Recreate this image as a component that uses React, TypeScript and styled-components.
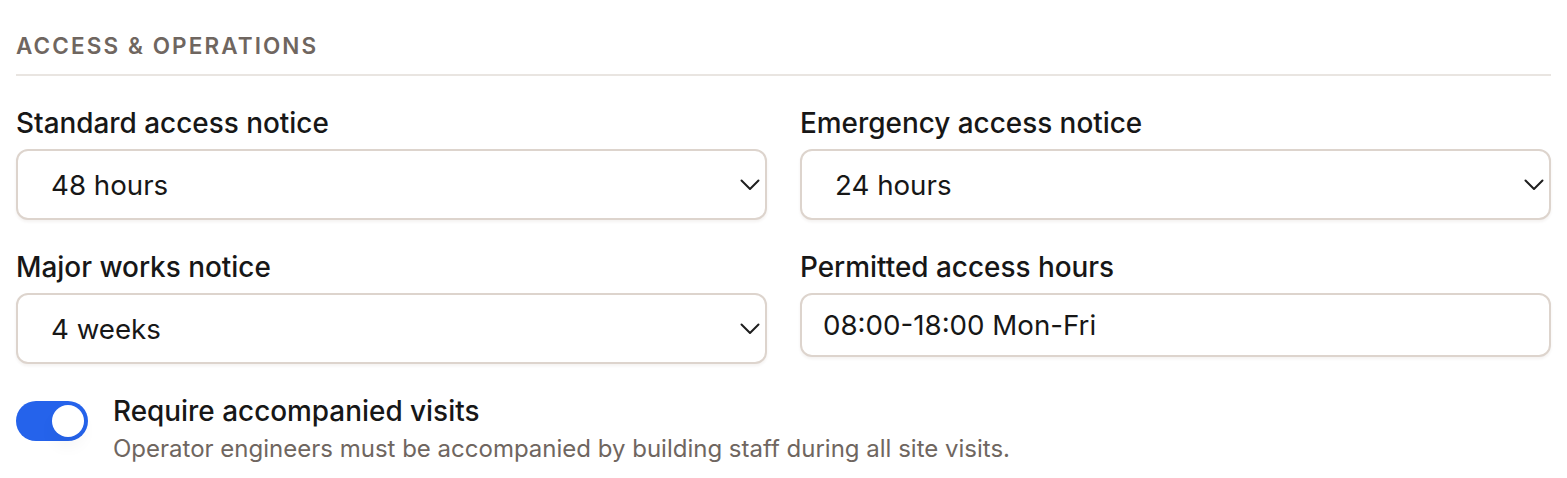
import React from "react";
import styled, { createGlobalStyle } from "styled-components";

const Global = createGlobalStyle`
  html, body { margin: 0; padding: 0; background: #ffffff; }
  body { font-family: Inter, "Noto Sans", sans-serif; color: #171717; }
  * { box-sizing: border-box; }
`;

const Section = styled.section`
  padding: 28px 16px 20px 16px;
  display: flex;
  flex-direction: column;
`;

const Heading = styled.h2`
  margin: 0;
  font-size: 22.5px;
  line-height: 36px;
  font-weight: 600;
  letter-spacing: 2.1px;
  text-transform: uppercase;
  color: #6f6660;
  padding-bottom: 10px;
  border-bottom: 2px solid #e9e5e1;
`;

const Grid = styled.div`
  display: grid;
  grid-template-columns: 1fr 1fr;
  column-gap: 33px;
  row-gap: 30px;
  margin-top: 30px;
`;

const Field = styled.div`
  display: flex;
  flex-direction: column;
  gap: 9px;
`;

const Label = styled.label`
  font-size: 27.9px;
  line-height: 34px;
  font-weight: 450;
  color: #171717;
`;

const SelectWrap = styled.div`
  position: relative;
  display: flex;
`;

const Select = styled.select`
  appearance: none;
  -webkit-appearance: none;
  width: 100%;
  height: 71px;
  padding: 0 60px 0 33px;
  font-family: inherit;
  font-size: 27.7px;
  color: #171717;
  background: #ffffff;
  border: 2px solid #ddd4cd;
  border-radius: 12px;
  box-shadow: 0 2px 3px rgba(60, 40, 20, 0.06);
  outline: none;
`;

const Chevron = styled.svg`
  position: absolute;
  right: 7px;
  top: 50%;
  transform: translateY(-50%);
  pointer-events: none;
`;

const TextInput = styled.input`
  width: 100%;
  height: 64px;
  padding: 0 21px;
  font-family: inherit;
  font-size: 27.7px;
  color: #171717;
  background: #ffffff;
  border: 2px solid #ddd4cd;
  border-radius: 12px;
  box-shadow: 0 2px 3px rgba(60, 40, 20, 0.06);
  outline: none;
`;

const ToggleRow = styled.div`
  display: flex;
  align-items: flex-start;
  gap: 25px;
  margin-top: 30px;
`;

const Track = styled.button<{ $on: boolean }>`
  position: relative;
  flex: none;
  width: 72px;
  height: 40px;
  border: none;
  padding: 0;
  border-radius: 20px;
  background: ${(p) => (p.$on ? "#2563eb" : "#d6d0cb")};
  cursor: pointer;
  margin-top: 7px;
`;

const Knob = styled.span<{ $on: boolean }>`
  position: absolute;
  top: 4px;
  left: ${(p) => (p.$on ? "36px" : "4px")};
  width: 32px;
  height: 32px;
  border-radius: 50%;
  background: #ffffff;
  box-shadow: 0 10px 16px rgba(0, 0, 0, 0.04);
`;

const ToggleText = styled.div`
  display: flex;
  flex-direction: column;
  gap: 5px;
`;

const ToggleTitle = styled.div`
  font-size: 27.9px;
  line-height: 34px;
  font-weight: 450;
  color: #171717;
`;

const ToggleDesc = styled.div`
  font-size: 24px;
  line-height: 32px;
  color: #6f6660;
`;

const ChevronIcon = () => (
  <Chevron width="20" height="12" viewBox="0 0 20 12" fill="none" stroke="#1f1f1f" strokeWidth="2" strokeLinecap="round" strokeLinejoin="round">
    <path d="M1.5 1.5L10 10L18.5 1.5" />
  </Chevron>
);

const SelectField = ({ label, value, options }: { label: string; value: string; options: string[] }) => (
  <Field>
    <Label>{label}</Label>
    <SelectWrap>
      <Select defaultValue={value}>
        {options.map((o) => (
          <option key={o}>{o}</option>
        ))}
      </Select>
      <ChevronIcon />
    </SelectWrap>
  </Field>
);

export default function App() {
  const [on, setOn] = React.useState(true);
  return (
    <>
      <Global />
      <Section>
        <Heading>Access &amp; Operations</Heading>
        <Grid>
          <SelectField label="Standard access notice" value="48 hours" options={["24 hours", "48 hours", "72 hours"]} />
          <SelectField label="Emergency access notice" value="24 hours" options={["4 hours", "12 hours", "24 hours"]} />
          <SelectField label="Major works notice" value="4 weeks" options={["2 weeks", "4 weeks", "8 weeks"]} />
          <Field>
            <Label>Permitted access hours</Label>
            <TextInput defaultValue="08:00-18:00 Mon-Fri" />
          </Field>
        </Grid>
        <ToggleRow>
          <Track $on={on} onClick={() => setOn(!on)} aria-pressed={on}>
            <Knob $on={on} />
          </Track>
          <ToggleText>
            <ToggleTitle>Require accompanied visits</ToggleTitle>
            <ToggleDesc>Operator engineers must be accompanied by building staff during all site visits.</ToggleDesc>
          </ToggleText>
        </ToggleRow>
      </Section>
    </>
  );
}
